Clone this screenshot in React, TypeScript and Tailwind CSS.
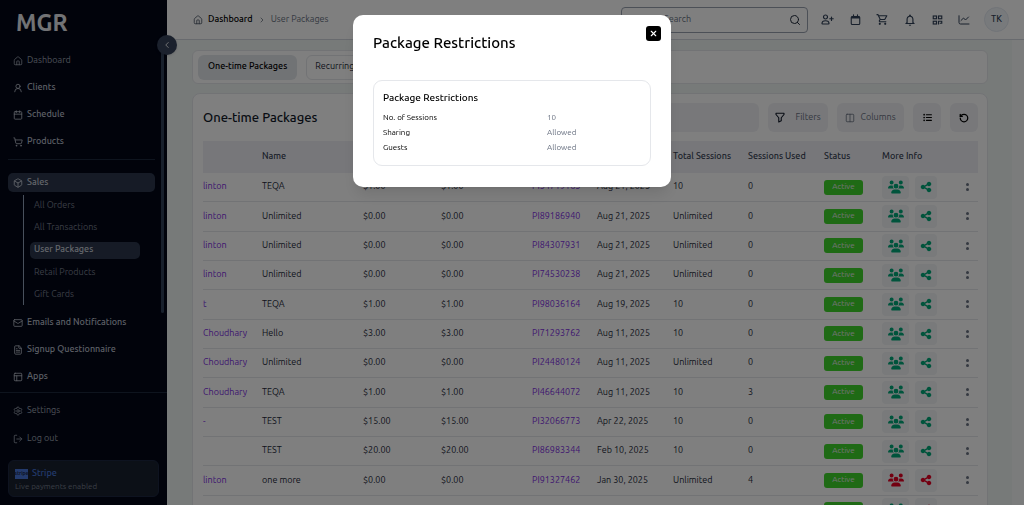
import type { ReactNode } from "react";
import {
  Box,
  Calendar,
  ChevronLeft,
  ChevronRight,
  Columns2,
  FileText,
  House,
  LogOut,
  Mail,
  PanelsTopLeft,
  RotateCcw,
  Search,
  Settings,
  ShoppingCart,
  UserRound,
  X,
} from "lucide-react";
import { FaListUl, FaShareNodes, FaUsers } from "react-icons/fa6";
import { MdNotificationsNone, MdOutlineShoppingCart } from "react-icons/md";

const icon = "size-[10px] shrink-0";

function NavItem({
  icon,
  label,
  bright = false,
}: {
  icon: ReactNode;
  label: string;
  bright?: boolean;
}) {
  return (
    <a
      href="#"
      className={`flex h-[19px] items-center gap-1 px-[5px] ${
        bright ? "font-medium text-[#b9bfca]" : "text-[#9aa1ae]"
      }`}
    >
      {icon}
      {label}
    </a>
  );
}

function AddPersonIcon() {
  return (
    <svg viewBox="0 0 26 22" className="h-[11px] w-[13px]" fill="none" stroke="currentColor" strokeWidth="2.4" strokeLinecap="round" strokeLinejoin="round">
      <circle cx="9" cy="6" r="4" />
      <path d="M2 19c0-3.6 3-5.500 7-5.500s7 1.900 7 5.500c0 .8-.6 1-1 1H3c-.5 0-1-.2-1-1Z" />
      <path d="M21 6v7M17.500 9.500h7" />
    </svg>
  );
}

function CalendarIcon() {
  return (
    <svg viewBox="0 0 22 24" className="h-3 w-[11px]" fill="none" stroke="currentColor" strokeWidth="2.200" strokeLinejoin="round">
      <rect x="2.500" y="5" width="17" height="16" rx="2" />
      <path d="M2.500 7h17" strokeWidth="4" />
      <path d="M7 1.500v4M15 1.500v4" strokeLinecap="round" />
    </svg>
  );
}

function QrIcon() {
  return (
    <svg viewBox="0 0 22 20" className="h-[10px] w-[11px]" fill="none" stroke="currentColor" strokeWidth="2.300">
      <rect x="2.500" y="2" width="6.500" height="5.500" />
      <rect x="13" y="2" width="6.500" height="5.500" />
      <rect x="2.500" y="12.500" width="6.500" height="5.500" />
      <path d="M13 19v-6.500h6.500v4h-4" />
    </svg>
  );
}

function ChartIcon() {
  return (
    <svg viewBox="0 0 24 20" className="h-[10px] w-3" fill="none" stroke="currentColor" strokeWidth="2" strokeLinecap="round" strokeLinejoin="round">
      <path d="M2 1.500v13.500a3 3 0 0 0 3 3h17" />
      <path d="m6 11 5-5 4 4 6-6" />
    </svg>
  );
}

function FunnelIcon() {
  return (
    <svg viewBox="0 0 20 22" className="h-[11px] w-[10px] text-gray-900" fill="none" stroke="currentColor" strokeWidth="2.200" strokeLinejoin="round">
      <path d="M2 2.500h16v2.500l-5.500 6.500v6l-5 2.500v-8.500L2 5Z" />
    </svg>
  );
}

function Sidebar() {
  return (
    <aside className="relative flex w-[167px] shrink-0 flex-col bg-[#020617] text-[9px]">
      <div className="flex min-h-0 flex-1 flex-col overflow-hidden border-b border-slate-800 pr-3 pl-2">
        <div className="flex h-[51px] shrink-0 items-center pb-[6px] pl-2 text-[23px] leading-none font-semibold text-gray-200">
          MGR
        </div>
        <nav className="flex flex-col">
          <div className="flex flex-col gap-2">
            <NavItem icon={<House className={icon} />} label="Dashboard" />
            <NavItem bright icon={<UserRound className={icon} />} label="Clients" />
            <NavItem bright icon={<Calendar className={icon} />} label="Schedule" />
            <NavItem bright icon={<ShoppingCart className={icon} />} label="Products" />
          </div>
          <hr className="mt-2 mb-[13px] border-slate-800" />
          <a
            href="#"
            className="flex h-[19px] items-center gap-1 rounded-[5px] bg-[#2c374d] px-[5px] font-medium text-[#c9ced8]"
          >
            <Box className={icon} />
            Sales
          </a>
          <div className="mt-[3px] ml-[15px] flex h-[110px] flex-col justify-between border-l border-slate-400 py-[2px] pl-[6px] text-[#757c8b]">
            {["All Orders", "All Transactions", "User Packages", "Retail Products", "Gift Cards"].map(
              (label) => (
                <a
                  key={label}
                  href="#"
                  className={`mr-[15px] flex h-[17px] items-center rounded-[5px] px-1 ${
                    label === "User Packages" ? "bg-[#2c374d] font-medium text-[#c9ced8]" : ""
                  }`}
                >
                  {label}
                </a>
              ),
            )}
          </div>
          <div className="mt-2 flex flex-col gap-2">
            <NavItem bright icon={<Mail className={icon} />} label="Emails and Notifications" />
            <NavItem bright icon={<FileText className={icon} />} label="Signup Questionnaire" />
            <NavItem bright icon={<PanelsTopLeft className={icon} />} label="Apps" />
          </div>
        </nav>
      </div>
      <div className="shrink-0 px-2 pt-2 pb-2">
        <div className="flex flex-col gap-[9px]">
          <NavItem icon={<Settings className={icon} />} label="Settings" />
          <NavItem icon={<LogOut className={icon} />} label="Log out" />
        </div>
        <div className="mt-3 h-[37px] rounded-md border border-[#1c2740] bg-[#18212f] px-[6px] py-1">
          <div className="flex h-[18px] items-center gap-1 font-medium text-[#4674d8]">
            <span className="flex h-[10px] w-[13px] items-center justify-center bg-[#4674d8] text-[5px] font-bold text-[#1e2b4d]">
              stripe
            </span>
            Stripe
          </div>
          <p className="text-[8px] leading-none text-[#757c8b]">Live payments enabled</p>
        </div>
      </div>
      <div className="absolute top-[50px] right-[3px] h-[263px] w-[3px] rounded-full bg-slate-700" />
      <button
        aria-label="Collapse sidebar"
        className="absolute top-[35px] -right-[10px] z-10 flex size-5 items-center justify-center rounded-full bg-[#36425a] text-white shadow"
      >
        <ChevronLeft className="size-[10px]" strokeWidth={2} />
      </button>
    </aside>
  );
}

function Header() {
  return (
    <header className="flex h-10 shrink-0 items-center border-b border-gray-300 bg-white pr-[15px] pl-[26px]">
      <nav aria-label="Breadcrumb" className="flex items-center gap-[5px] text-[9px]">
        <House className="size-[10px] text-gray-600" />
        <a href="#" className="font-medium text-black">
          Dashboard
        </a>
        <ChevronRight className="size-2 text-gray-600" />
        <span className="text-gray-500">User Packages</span>
      </nav>
      <label className="ml-auto flex h-[26px] w-[187px] items-center rounded border border-gray-400 pr-[6px] pl-[42px] text-gray-800">
        <input
          aria-label="Search"
          placeholder="Search"
          className="min-w-0 flex-1 bg-transparent text-[9px] outline-none placeholder:text-gray-500"
        />
        <Search className="size-3" />
      </label>
      <div className="ml-[13px] flex items-center text-slate-700">
        <div className="flex items-center gap-[15px]">
          <button aria-label="Add client" className="flex w-[13px] justify-center">
            <AddPersonIcon />
          </button>
          <button aria-label="Calendar" className="flex w-3 justify-center">
            <CalendarIcon />
          </button>
          <button aria-label="Cart" className="flex w-[13px] justify-center">
            <MdOutlineShoppingCart className="size-[13px]" />
          </button>
          <button aria-label="Notifications" className="flex w-3 justify-center">
            <MdNotificationsNone className="size-[14px] shrink-0" />
          </button>
          <button aria-label="QR code" className="flex w-3 justify-center">
            <QrIcon />
          </button>
          <button aria-label="Reports" className="flex w-3 justify-center">
            <ChartIcon />
          </button>
        </div>
        <button className="ml-[14px] flex size-[25px] items-center justify-center rounded-full border border-slate-200 bg-slate-100 text-[9px] font-medium">
          TK
        </button>
      </div>
    </header>
  );
}

type Row = {
  client: string;
  name: string;
  price: string;
  id: string;
  date: string;
  total: string;
  used: string;
  red?: boolean;
  redShare?: boolean;
};

const rows: Row[] = [
  { client: "linton", name: "TEQA", price: "$1.00", id: "PI54719165", date: "Aug 21, 2025", total: "10", used: "0" },
  { client: "linton", name: "Unlimited", price: "$0.00", id: "PI89186940", date: "Aug 21, 2025", total: "Unlimited", used: "0" },
  { client: "linton", name: "Unlimited", price: "$0.00", id: "PI84307931", date: "Aug 21, 2025", total: "Unlimited", used: "0" },
  { client: "linton", name: "Unlimited", price: "$0.00", id: "PI74530238", date: "Aug 21, 2025", total: "Unlimited", used: "0" },
  { client: "t", name: "TEQA", price: "$1.00", id: "PI98036164", date: "Aug 19, 2025", total: "10", used: "0" },
  { client: "Choudhary", name: "Hello", price: "$3.00", id: "PI71293762", date: "Aug 11, 2025", total: "10", used: "0" },
  { client: "Choudhary", name: "Unlimited", price: "$0.00", id: "PI24480124", date: "Aug 11, 2025", total: "Unlimited", used: "0" },
  { client: "Choudhary", name: "TEQA", price: "$1.00", id: "PI46644072", date: "Aug 11, 2025", total: "10", used: "3" },
  { client: "-", name: "TEST", price: "$15.00", id: "PI32066773", date: "Apr 22, 2025", total: "10", used: "0" },
  { client: "", name: "TEST", price: "$20.00", id: "PI86983344", date: "Feb 10, 2025", total: "10", used: "0" },
  { client: "linton", name: "one more", price: "$0.00", id: "PI91327462", date: "Jan 30, 2025", total: "Unlimited", used: "4", red: true, redShare: true },
  { client: "", name: "", price: "", id: "", date: "", total: "", used: "", redShare: true },
];

const toolButton = "flex h-[29px] items-center justify-center rounded-md bg-[#f0f1f5] text-gray-500";

function PackagesTable() {
  return (
    <div className="mt-[9px] overflow-hidden">
      <table className="h-96 w-full table-fixed border-collapse text-left text-[9px] whitespace-nowrap text-gray-800">
        <colgroup>
          <col className="w-[59px]" />
          <col className="w-[101px]" />
          <col className="w-[78px]" />
          <col className="w-[91px]" />
          <col className="w-[65px]" />
          <col className="w-[76px]" />
          <col className="w-[75px]" />
          <col className="w-[76px]" />
          <col className="w-[58px]" />
          <col className="w-[80px]" />
          <col className="w-[16px]" />
        </colgroup>
        <thead className="bg-[#eeeff4] text-gray-700">
          <tr className="h-8">
            <th />
            <th className="p-0 font-medium">Name</th>
            <th />
            <th />
            <th />
            <th />
            <th className="p-0 font-medium">Total Sessions</th>
            <th className="p-0 font-medium">Sessions Used</th>
            <th className="p-0 font-medium">Status</th>
            <th className="p-0 font-medium">More Info</th>
            <th />
          </tr>
        </thead>
        <tbody>
          {rows.map((r, i) => (
            <tr key={i} className="border-b border-gray-200">
              <td className="p-0">
                <a href="#" className="text-[#7c2be0]">
                  {r.client}
                </a>
              </td>
              <td className="p-0">{r.name}</td>
              <td className="p-0">{r.price}</td>
              <td className="p-0">{r.price}</td>
              <td className="p-0">
                <a href="#" className="text-[#7c2be0]">
                  {r.id}
                </a>
              </td>
              <td className="p-0">{r.date}</td>
              <td className="p-0">{r.total}</td>
              <td className="p-0">{r.used}</td>
              <td className="p-0">
                <span className="flex h-[15px] w-[39px] items-center justify-center rounded-[3px] bg-[#3fd42a] text-[8px] text-gray-200">
                  Active
                </span>
              </td>
              <td className="p-0">
                <div className="flex gap-[6px]">
                  <button
                    aria-label="Guests"
                    className={`flex h-[23px] w-[27px] items-center justify-center rounded bg-[#f3f4f7] ${
                      r.red ? "text-[#e60023]" : "text-[#00a878]"
                    }`}
                  >
                    <FaUsers className="size-4" />
                  </button>
                  <button
                    aria-label="Sharing"
                    className={`flex h-[23px] w-[22px] items-center justify-center rounded bg-[#f3f4f7] ${
                      r.redShare ? "text-[#e60023]" : "text-[#00a878]"
                    }`}
                  >
                    <FaShareNodes className="size-3" />
                  </button>
                </div>
              </td>
              <td className="p-0">
                <button aria-label="Row actions" className="ml-[3px] flex flex-col gap-[2px] px-px">
                  <span className="size-[3px] rounded-full bg-gray-500" />
                  <span className="size-[3px] rounded-full bg-gray-500" />
                </button>
              </td>
            </tr>
          ))}
        </tbody>
      </table>
    </div>
  );
}

function RestrictionsDialog() {
  return (
    <div className="fixed inset-0 z-20 flex items-start justify-center bg-black/50 pt-[15px]">
      <div
        role="dialog"
        aria-modal="true"
        aria-labelledby="dialog-title"
        className="w-full max-w-[318px] rounded-[10px] bg-white px-5 pb-[21px] text-black shadow-lg"
      >
        <div className="flex justify-between pt-[11px]">
          <h2 id="dialog-title" className="pt-[7px] text-[15px] leading-5 font-medium">
            Package Restrictions
          </h2>
          <button
            aria-label="Close"
            className="-mr-[10px] flex size-[15px] items-center justify-center rounded-[3px] bg-black text-white"
          >
            <X className="size-[9px]" strokeWidth={3} />
          </button>
        </div>
        <section className="mt-[27px] rounded-[9px] border border-gray-200 px-[9px] pt-[9px] pb-[10px]">
          <h3 className="text-[10px] leading-4 font-medium">Package Restrictions</h3>
          <dl className="mt-1 grid grid-cols-[164px_1fr] text-[8px] leading-[15px]">
            <dt>No. of Sessions</dt>
            <dd className="text-gray-500">10</dd>
            <dt>Sharing</dt>
            <dd className="text-gray-500">Allowed</dd>
            <dt>Guests</dt>
            <dd className="text-gray-500">Allowed</dd>
          </dl>
        </section>
      </div>
    </div>
  );
}

export default function App() {
  return (
    <div className="flex h-screen overflow-hidden bg-[#f7f8f9] font-['Ubuntu','Noto_Sans',sans-serif]">
      <Sidebar />
      <div className="flex min-w-0 flex-1 flex-col">
        <Header />
        <main className="mr-3 min-h-0 flex-1 overflow-hidden bg-[#eff4f3] pt-[10px] pr-6 pl-[25px]">
          <div className="flex h-[34px] items-center gap-[9px] rounded-md border border-gray-200 bg-white px-[5px] text-[9px]">
            <button className="h-[25px] rounded-md bg-[#e3e6eb] px-[10px] font-medium text-black">
              One-time Packages
            </button>
            <button className="h-[25px] rounded-md border border-gray-200 px-2 text-gray-800">
              Recurring
            </button>
          </div>
          <section className="mt-[9px] rounded-t-lg border border-gray-200 bg-white pt-[9px] pr-[9px] pl-[10px]">
            <div className="flex items-center gap-[9px]">
              <h1 className="mr-auto text-[13px] font-medium text-gray-900">One-time Packages</h1>
              <div className="h-[29px] w-[193px] rounded-md bg-[#f0f1f5]" />
              <button className={`${toolButton} w-[60px] gap-[10px] text-[9px]`}>
                <FunnelIcon />
                Filters
              </button>
              <button className={`${toolButton} w-[67px] gap-[5px] text-[9px]`}>
                <Columns2 className="size-[10px]" />
                Columns
              </button>
              <button aria-label="List view" className={`${toolButton} w-[28px]`}>
                <FaListUl className="size-[9px] text-black" />
              </button>
              <button aria-label="Refresh" className={`${toolButton} w-[28px]`}>
                <RotateCcw className="size-[10px] text-black" strokeWidth={3} />
              </button>
            </div>
            <PackagesTable />
          </section>
        </main>
      </div>
      <RestrictionsDialog />
    </div>
  );
}
